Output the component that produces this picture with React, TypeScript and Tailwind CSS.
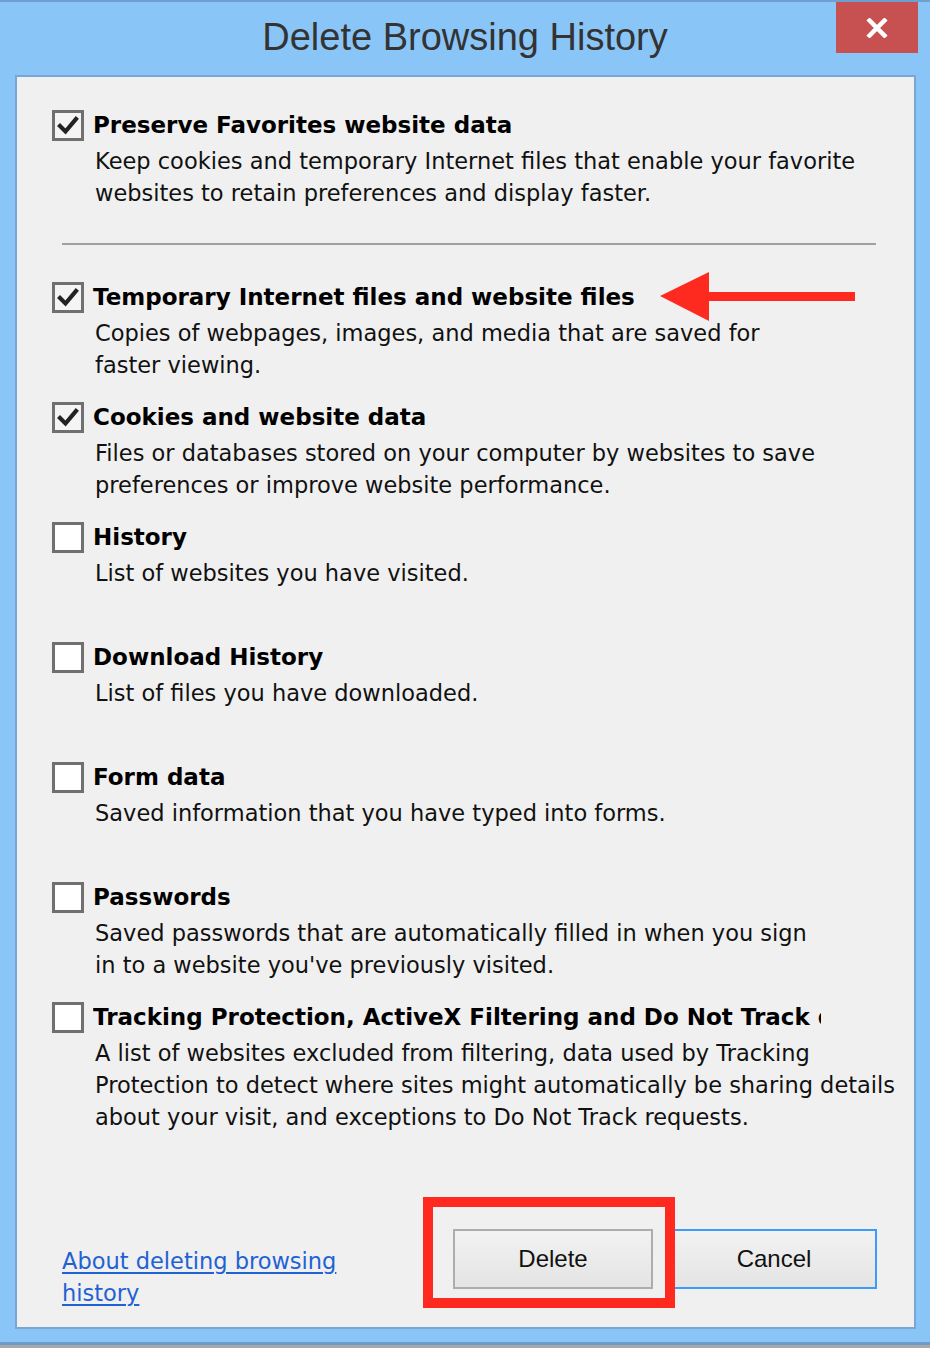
import React from "react";

type Item = {
  title: string;
  lines: string[];
  checked: boolean;
  clip?: boolean;
};

const items: Item[] = [
  {
    title: "Temporary Internet files and website files",
    lines: ["Copies of webpages, images, and media that are saved for", "faster viewing."],
    checked: true,
  },
  {
    title: "Cookies and website data",
    lines: [
      "Files or databases stored on your computer by websites to save",
      "preferences or improve website performance.",
    ],
    checked: true,
  },
  { title: "History", lines: ["List of websites you have visited."], checked: false },
  { title: "Download History", lines: ["List of files you have downloaded."], checked: false },
  { title: "Form data", lines: ["Saved information that you have typed into forms."], checked: false },
  {
    title: "Passwords",
    lines: [
      "Saved passwords that are automatically filled in when you sign",
      "in to a website you've previously visited.",
    ],
    checked: false,
  },
  {
    title: "Tracking Protection, ActiveX Filtering and Do Not Track data",
    lines: [
      "A list of websites excluded from filtering, data used by Tracking",
      "Protection to detect where sites might automatically be sharing details",
      "about your visit, and exceptions to Do Not Track requests.",
    ],
    checked: false,
    clip: true,
  },
];

const tahoma = { fontFamily: '"DejaVu Sans", Verdana, sans-serif' };

function Checkbox({ checked }: { checked: boolean }) {
  return (
    <div
      className={`w-[32px] h-[31px] shrink-0 border-[3px] border-[#707070] flex items-center justify-center ${
        checked ? "bg-[#f4f4f4]" : "bg-white"
      }`}
    >
      {checked && (
        <svg width="24" height="22" viewBox="0 0 24 22">
          <path d="M4 12 L9.5 17.5 L20 5" fill="none" stroke="#222" strokeWidth="4.2" strokeLinecap="square" />
        </svg>
      )}
    </div>
  );
}

function Option({ item, height }: { item: Item; height?: string }) {
  return (
    <div className={height} style={tahoma}>
      <div className="flex items-center h-[36px] pl-[35px]">
        <Checkbox checked={item.checked} />
        <div
          className={`ml-[9px] text-[23px] font-bold text-black whitespace-nowrap ${
            item.clip ? "w-[728px] overflow-hidden" : ""
          }`}
        >
          {item.title}
        </div>
      </div>
      <div className="mt-[2px] pl-[78px] text-[22.5px] leading-[32px] text-[#111] whitespace-nowrap">
        {item.lines.map((l) => (
          <div key={l}>{l}</div>
        ))}
      </div>
    </div>
  );
}

export default function App() {
  return (
    <div
      className="w-[930px] h-[1348px] bg-[#8ac5f8] flex flex-col"
      style={{ fontFamily: '"Liberation Sans", Arial, sans-serif' }}
    >
      <div className="h-[2px] bg-[#6d9fd0]" />
      <div className="relative h-[73px] flex items-center justify-center">
        <span className="text-[38px] text-[#333] -mt-[2px]">Delete Browsing History</span>
        <button className="absolute right-[12px] top-0 w-[82px] h-[51px] bg-[#c75050] flex items-center justify-center">
          <svg width="24" height="20" viewBox="0 0 24 20">
            <path d="M3 1 L21 19 M21 1 L3 19" stroke="white" strokeWidth="4.5" />
          </svg>
        </button>
      </div>

      <div className="relative ml-[15px] mr-[14px] h-[1254px] border-2 border-[#7aa6d4] bg-[#f0f0f0] flex flex-col">
        <div className="pt-[30px]">
          <Option
            item={{
              title: "Preserve Favorites website data",
              lines: [
                "Keep cookies and temporary Internet files that enable your favorite",
                "websites to retain preferences and display faster.",
              ],
              checked: true,
            }}
            height="h-[136px]"
          />
        </div>
        <div className="ml-[45px] w-[814px] h-[2px] bg-[#a0a0a0]" />
        <div className="mt-[34px] flex flex-col">
          {items.map((it) => (
            <Option key={it.title} item={it} height="h-[120px]" />
          ))}
        </div>

        <div className="mt-auto mb-[18px] flex items-end">
          <a
            href="#"
            style={tahoma}
            className="ml-[45px] w-[330px] text-[22.5px] leading-[32px] text-[#1e62d4] underline underline-offset-[3px]"
          >
            About deleting browsing history
          </a>
          <div className="relative ml-[61px] mb-[20px]">
            <button className="w-[200px] h-[60px] border-2 border-[#adadad] bg-gradient-to-b from-[#f2f2f2] to-[#e4e4e4] text-[24px] text-[#111]">
              Delete
            </button>
            <div className="absolute left-[-30px] top-[-32px] right-[-22px] bottom-[-19px] border-[10px] border-[#ff2a1f] pointer-events-none z-10" />
          </div>
          <button className="ml-[18px] mb-[20px] w-[206px] h-[60px] border-2 border-[#3c9cfc] bg-gradient-to-b from-[#f2f2f2] to-[#e4e4e4] text-[24px] text-[#111]">
            Cancel
          </button>
        </div>

        <svg
          className="absolute left-[643px] top-[193px]"
          width="198"
          height="54"
          viewBox="0 0 198 54"
        >
          <polygon points="0,26 49,2 49,51" fill="#ff2a1f" />
          <rect x="46" y="22" width="149" height="9" fill="#ff2a1f" />
        </svg>
      </div>

      <div className="h-[13px]" />
      <div className="h-[3px] bg-[#6b9ccc]" />
      <div className="flex-1 bg-[#a8a8a8]" />
    </div>
  );
}
